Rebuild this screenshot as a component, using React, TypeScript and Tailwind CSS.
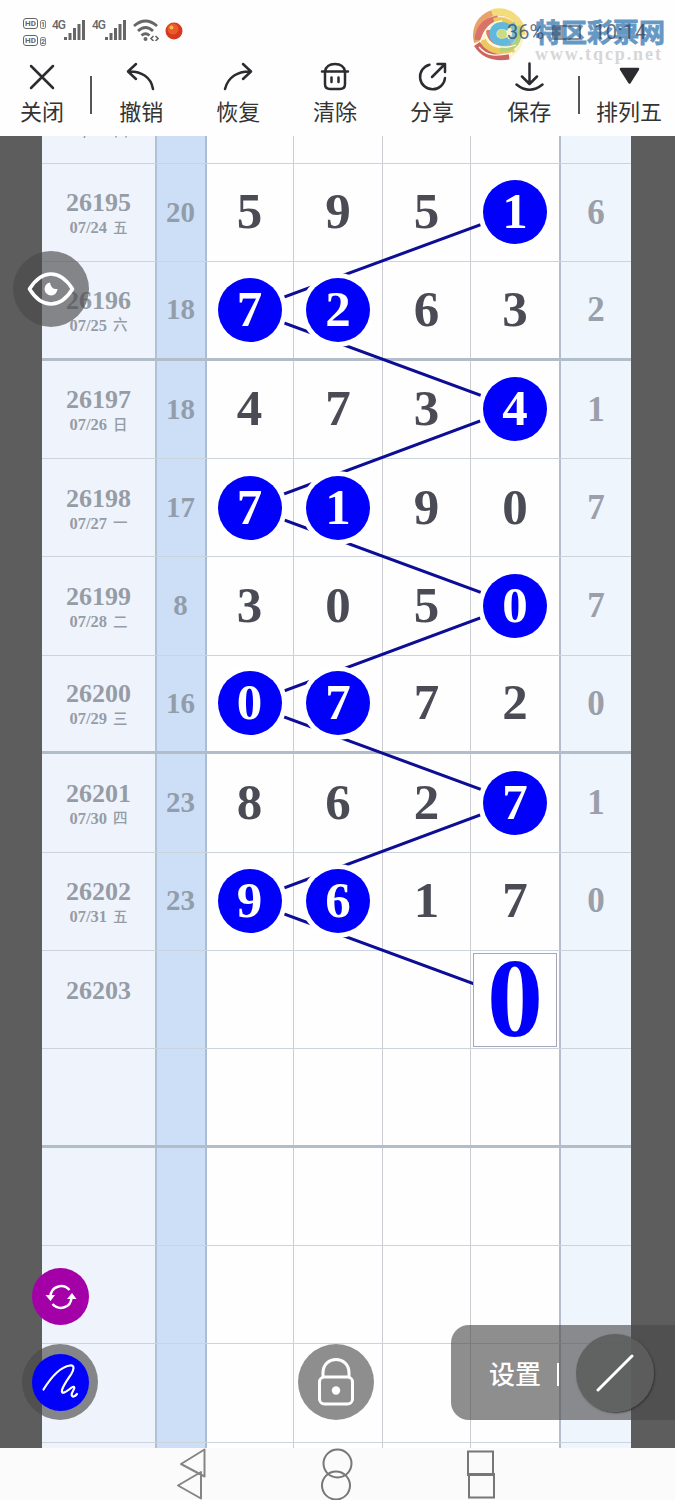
import type { ReactNode } from 'react';

type Draw = { issue: string; date?: string; sum?: string; nums?: string[]; marked?: number[]; last?: string; thick?: boolean };

const DRAWS: Draw[] = [
  { issue: '' },
  { issue: '26195', date: '07/24 五', sum: '20', nums: ['5', '9', '5', '1'], marked: [3], last: '6' },
  { issue: '26196', date: '07/25 六', sum: '18', nums: ['7', '2', '6', '3'], marked: [0, 1], last: '2', thick: true },
  { issue: '26197', date: '07/26 日', sum: '18', nums: ['4', '7', '3', '4'], marked: [3], last: '1' },
  { issue: '26198', date: '07/27 一', sum: '17', nums: ['7', '1', '9', '0'], marked: [0, 1], last: '7' },
  { issue: '26199', date: '07/28 二', sum: '8', nums: ['3', '0', '5', '0'], marked: [3], last: '7' },
  { issue: '26200', date: '07/29 三', sum: '16', nums: ['0', '7', '7', '2'], marked: [0, 1], last: '0', thick: true },
  { issue: '26201', date: '07/30 四', sum: '23', nums: ['8', '6', '2', '7'], marked: [3], last: '1' },
  { issue: '26202', date: '07/31 五', sum: '23', nums: ['9', '6', '1', '7'], marked: [0, 1], last: '0' },
  { issue: '26203' },
  { issue: '', thick: true },
  { issue: '' },
  { issue: '' },
  { issue: '' },
  { issue: '' },
];

// the row that will hold the hand-placed guess
const GUESS_ISSUE = '26203';

const COLS = 'grid grid-cols-[115px_50px_87px_89px_88px_90px_70px]';

// ─── Status bar ───────────────────────────────────────────────────────────────
function Signal() {
  return (
    <svg width="24" height="24" viewBox="0 0 24 24" stroke="#666" strokeWidth="3" className="-ml-0.5">
      <path d="M2.500 23v-3M7 23v-7M11.500 23v-12M16 23V7M20.500 23V3" />
    </svg>
  );
}

function HdBadge({ n }: { n: string }) {
  return (
    <div className="flex items-center gap-[2px] h-[12px]">
      <span className="w-[15px] h-[11px] rounded-[3px] border-[1.5px] border-[#666] text-[8px] leading-[9px] font-bold text-center">HD</span>
      <span className="w-[6px] h-[9px] rounded-[2px] border border-[#888] text-[7px] leading-[8px] font-bold text-center mt-[2px]">{n}</span>
    </div>
  );
}

function Watermark() {
  return (
    <div className="absolute left-[472px] top-[8px] flex items-start">
      <svg width="54" height="54" viewBox="0 0 54 54" fill="none">
        <circle cx="27" cy="27" r="25" fill="#fbf3d2" />
        <path d="M5 34A23 23 0 0 1 38 7" stroke="#e9a268" strokeWidth="6" />
        <path d="M20 5A23 23 0 0 1 50 27" stroke="#f3dc7c" strokeWidth="7" />
        <path d="M6 32C7 20 14 13 26 11" stroke="#d9736a" strokeWidth="7" />
        <path d="M22 13C34 9 44 17 45 30" stroke="#f0c860" strokeWidth="6" />
        <path d="M5 36C12 47 24 50 37 48" stroke="#cc6464" strokeWidth="7" />
        <path d="M11 32C15 42 27 46 42 41" stroke="#edc75f" strokeWidth="6" />
        <path d="M46 18C50 32 43 42 28 41" stroke="#b2d07c" strokeWidth="5" />
        <path d="M16 22C16 33 25 38 39 35" stroke="#d97d6a" strokeWidth="4" />
        <path d="M40 15C46 25 42 35 31 36" stroke="#79bfd8" strokeWidth="5" />
        <path d="M37 20C30 15 21 18 21 26 21 34 30 36 37 32" stroke="#5fb9de" strokeWidth="7" />
        <circle cx="30" cy="26" r="5" fill="#c9dc86" />
        <path d="M7 39C15 49 25 48 40 45M8 34C13 23 16 14 30 13M14 27C17 38 29 42 44 37" stroke="#fffbe6" strokeWidth="1.300" />
      </svg>
      <div className="ml-[9px] mt-[8px]">
        <div className="font-['Noto_Sans_CJK_SC',sans-serif] font-bold text-[26px] leading-[29px] text-[#6698c4] whitespace-nowrap [-webkit-text-stroke:0.8px_#6698c4]">特区彩票网</div>
        <div className="font-['Liberation_Serif',serif] font-bold text-[18px] leading-[18px] tracking-[1.9px] text-[#d6d6d6] whitespace-nowrap">www.tqcp.net</div>
      </div>
    </div>
  );
}

function StatusBar() {
  return (
    <div className="relative h-[58px] bg-[#fefefe] text-[#666] font-['Roboto',sans-serif]">
      <div className="flex items-start pl-[23px] pt-[17px]">
        <div className="flex flex-col gap-[5px] w-[29px]">
          <HdBadge n="1" />
          <HdBadge n="2" />
        </div>
        <span className="text-[12px] leading-[12px] font-medium mt-[2px] w-[13px] tracking-[-1px]">4G</span>
        <Signal />
        <span className="text-[12px] leading-[12px] font-medium mt-[2px] ml-[5px] w-[14px] tracking-[-1px]">4G</span>
        <Signal />
        <svg width="26" height="24" viewBox="0 0 26 24" fill="none" stroke="#666" strokeWidth="2.800" className="ml-[5px]">
          <path d="M1 9Q12.500 -1 24 9M5 14Q12.500 7 20 14M8.500 18.500Q12.500 15 16.500 18.500" />
          <circle cx="12.500" cy="22" r="2" fill="#666" stroke="none" />
          <path d="M20.500 19l-2.500 2.500 2.500 2.500M22.500 19l2.500 2.500-2.500 2.500" strokeWidth="1.600" />
        </svg>
        <svg width="18" height="18" viewBox="0 0 18 18" className="ml-[6px] mt-[5px]">
          <circle cx="9" cy="9" r="8.500" fill="#d63a1c" />
          <circle cx="8" cy="7" r="5.500" fill="#ea5a2e" />
          <circle cx="6.500" cy="5.500" r="2" fill="#ffb648" />
        </svg>
      </div>
      <Watermark />
      <div className="absolute left-[507px] top-[20px] flex items-center text-[20px] leading-[24px] text-[#34445c]/75">
        <span className="w-[45px]">36%</span>
        <span className="w-[29px] h-[15px] rounded-[2px] border-2 border-[#34445c]/60 flex">
          <span className="w-[9px] bg-[#34445c]/50" />
        </span>
        <span className="ml-[13px] tracking-[0.6px]">10:14</span>
      </div>
    </div>
  );
}

// ─── Toolbar ──────────────────────────────────────────────────────────────────
function Tool({ label, className, children }: { label: string; className: string; children: ReactNode }) {
  return (
    <button className={`flex flex-col items-center ${className}`}>
      <svg width="30" height="30" viewBox="0 0 30 30" fill="none" stroke="#2b2b30" strokeWidth="2.500" strokeLinecap="round" strokeLinejoin="round">{children}</svg>
      <span className="mt-[2px] text-[22px] leading-[32px] text-[#333] whitespace-nowrap">{label}</span>
    </button>
  );
}

function Toolbar() {
  return (
    <div className="h-[78px] bg-[#fefefe] flex items-start pt-1 font-['Noto_Sans_CJK_SC',sans-serif]">
      <Tool label="关闭" className="w-[84px] mr-1.5">
        <path d="M4 4l22 22M26 4L4 26" />
      </Tool>
      <div className="w-[2px] h-[38px] mt-[14px] mr-[1px] bg-[#555]" />
      <Tool label="撤销" className="w-[97px]">
        <path d="M10 2L2 9.500l8 7.500M2.500 9.500C15 9 25 15 27 27" />
      </Tool>
      <Tool label="恢复" className="w-[97px]">
        <path d="M20 2l8 7.500-8 7.500M27.500 9.500C15 9 5 15 2 27" />
      </Tool>
      <Tool label="清除" className="w-[97px]">
        <path d="M2 9.500h26M5 9.500C6 4 10 2 15 2s9 2 10 7.500M5 9.500V22q0 5 5 5h10q5 0 5-5V9.500M11.500 15.500v4.500M18.500 15.500v4.500" />
      </Tool>
      <Tool label="分享" className="w-[97px]">
        <path d="M12.500 2.700A12.500 12.500 0 1 0 28 16M15 15L28 2M20.500 2H28v8" />
      </Tool>
      <Tool label="保存" className="w-[98px]">
        <path d="M15.500 1.500v20M8 14.500l7.500 7.500 7.500-7.500M2.500 22.500q13 10.500 26 0" />
      </Tool>
      <div className="w-[2px] h-[38px] mt-[14px] bg-[#555]" />
      <Tool label="排列五" className="w-[92px] ml-[3px]">
        <path d="M7 7h17l-8.500 13.500Z" fill="#2b2b30" />
      </Tool>
    </div>
  );
}

// ─── Trend board ──────────────────────────────────────────────────────────────
function NumberCell({ value, marked }: { value?: string; marked?: boolean }) {
  if (!value) return null;
  return marked ? (
    <span className="relative z-10 size-16 shrink-0 rounded-full bg-[#0000fb] ring-[5px] ring-white text-white flex items-center justify-center">
      <span className="-mt-[1px]">{value}</span>
    </span>
  ) : (
    <span className="-mt-[1px]">{value}</span>
  );
}

function BoardRow({ draw }: { draw: Draw }) {
  const guess = draw.issue === GUESS_ISSUE;
  return (
    <div className={`${COLS} h-[98.4px] box-border ${draw.thick ? 'border-b-[3px] border-[#b1bdc8]' : 'border-b border-[#cbd3dc]'}`}>
      <div className="flex flex-col items-center justify-center border-r-2 border-[#b0c1d4] text-[#969ca6] font-bold">
        <span className={`text-[26px] leading-[26px] ${guess ? '-mt-[17px]' : 'mt-[6px]'}`}>{draw.issue}</span>
        {draw.date && <span className="text-[16.5px] leading-[24px] flex items-center gap-[6px]">
          {draw.date.slice(0, 5)}
          <span className="text-[14.5px] font-medium font-['Noto_Sans_CJK_SC',sans-serif] -mt-[3px]">{draw.date.slice(6)}</span>
        </span>}
      </div>
      <div className="flex items-center justify-center border-r-2 border-[#a9bdd3] text-[29px] font-bold text-[#929dac] pr-[1px]">{draw.sum}</div>
      {[0, 1, 2, 3].map(i => (
        <div key={i} className={`flex items-center justify-center text-[51px] leading-[51px] font-bold text-[#4a4b54] ${i === 3 ? 'border-r-2 border-[#b3bdcc]' : 'border-r border-[#cccdd3]'} ${i === 0 ? 'pr-[1px]' : ''}`}>
          {guess && i === 3 ? (
            <span className="relative z-10 w-[84px] h-[94px] border-[1.5px] border-[#a5a7b8] bg-white text-[#0000fb] text-[112px] leading-[88px] text-center">0</span>
          ) : (
            <NumberCell value={draw.nums?.[i]} marked={draw.marked?.includes(i)} />
          )}
        </div>
      ))}
      <div className="flex items-center justify-center text-[35px] font-bold text-[#9a9fa9] pt-[1px]">{draw.last}</div>
    </div>
  );
}

// zig-zag guide joining the circled numbers, in board coordinates
const GUIDE: [number, number][] = [
  [473, 76], [207, 174], [473, 272], [207, 371], [473, 469], [207, 568], [473, 666], [207, 765], [473, 863],
];

function Board() {
  return (
    <div className="h-[1312px] bg-[#5d5d5d] flex justify-center overflow-hidden pr-[2px]">
      <div className="relative w-[589px] font-['Liberation_Serif','Noto_Sans_CJK_SC',serif]">
        <div className="-mt-[70.6px] bg-[linear-gradient(to_right,#eff4fc_0_115px,#cddff7_115px_165px,#fefefe_165px_519px,#eef5fd_519px)]">
          {DRAWS.map((d, i) => <BoardRow key={i} draw={d} />)}
        </div>
        <svg className="absolute left-0 top-0" width="589" height="1312" viewBox="0 0 589 1312">
          <polyline points={GUIDE.map(p => p.join(',')).join(' ')} fill="none" stroke="#0d0d96" strokeWidth="3" />
          {/* tail of the date scrolled under the toolbar */}
          <path d="M43 0l-1 2M74 0v1.500M84 0v1.500" stroke="#969ca6" strokeWidth="1.500" />
        </svg>
      </div>
    </div>
  );
}

// ─── Floating controls ────────────────────────────────────────────────────────
function Floating() {
  return (
    <>
      <div className="absolute z-20 left-[13px] top-[251px] size-[76px] rounded-full bg-[#49494b]/65 flex items-center justify-center">
        <svg width="48" height="36" viewBox="0 0 48 36" fill="none" stroke="#fff" strokeWidth="3.600" strokeLinejoin="round">
          <path d="M2.500 18C15-2 33-2 45.500 18 33 38 15 38 2.500 18Z" />
          <path d="M23 11.500A6.500 6.500 0 1 0 30.500 18Q24 19 23 11.500Z" fill="#fff" stroke="none" />
        </svg>
      </div>
      <div className="absolute z-20 left-[32px] top-[1268px] size-[57px] rounded-full bg-[#a300a8] flex items-center justify-center">
        <svg width="32" height="26" viewBox="0 0 32 26" fill="none" stroke="#fff" strokeWidth="2.500">
          <path d="M5.500 12.500C6 2 18-1 24.500 6M26.500 13.500C26 24 14 27 7.500 20" />
          <path d="M.5 11h9.500l-4.500 6ZM22 15h9.500l-4.500-6Z" fill="#fff" stroke="none" />
        </svg>
      </div>
      <div className="absolute z-20 left-[22px] top-[1344px] size-[76px] rounded-full bg-[#494949]/65 flex items-center justify-center">
        <div className="size-[57px] rounded-full bg-[#0000fb] flex items-center justify-center">
          <svg width="38" height="38" viewBox="0 0 38 38" fill="none" stroke="#fff" strokeWidth="2.200" strokeLinecap="round" strokeLinejoin="round">
            <path d="M2.500 26.500C9 16 19 4 29 2.500c5-.5 4 4 1 9C27 16 22 23 21 27c-1 5 4 2 9-2 4-3 4 0 2 3-3 5 0 8 4 3" />
          </svg>
        </div>
      </div>
      <div className="absolute z-20 left-[298px] top-[1344px] size-[76px] rounded-full bg-[#494949]/62 flex items-center justify-center">
        <svg width="36" height="50" viewBox="0 0 36 50" fill="none" stroke="#fff" strokeWidth="3">
          <path d="M5 20v-4C5-2 31-2 31 16v4" />
          <rect x="1.500" y="20" width="33" height="27" rx="5" />
          <circle cx="18" cy="33.500" r="4.200" fill="#fff" stroke="none" />
        </svg>
      </div>
      <div className="absolute z-20 left-[451px] top-[1325px] w-[224px] h-[95px] rounded-l-[18px] bg-[#494949]/62 flex items-center pl-[38px]">
        <span className="text-white text-[26px] leading-[30px] font-medium font-['Noto_Sans_CJK_SC',sans-serif]">设置</span>
        <span className="ml-[16px] mt-[3px] w-[2px] h-[23px] bg-white" />
        <div className="ml-[17px] size-[78px] rounded-full bg-[#5d5d5d]/90 shadow-[1px_1px_2px_#333] flex items-center justify-center">
          <svg width="38" height="38" viewBox="0 0 38 38" stroke="#fff" strokeWidth="3" strokeLinecap="round">
            <path d="M2 36L36 2" />
          </svg>
        </div>
      </div>
    </>
  );
}

function NavBar() {
  return (
    <div className="h-[52px] bg-[#fbfbfb] flex justify-between pl-[176px] pr-[178px]">
      <svg width="32" height="52" viewBox="0 0 32 52" fill="none" stroke="#858585" strokeWidth="2" strokeLinejoin="round">
        <path d="M5 16L28.500 1.500v27ZM2 37.500L25 24v26.500Z" />
      </svg>
      <svg width="32" height="52" viewBox="0 0 32 52" fill="none" stroke="#777" strokeWidth="2" className="-ml-[1px]">
        <circle cx="16.500" cy="15.500" r="14" />
        <circle cx="15" cy="37.500" r="14" />
      </svg>
      <svg width="30" height="52" viewBox="0 0 30 52" fill="none" stroke="#777" strokeWidth="2">
        <rect x="1" y="3.500" width="25" height="23.500" />
        <rect x="2" y="26" width="25" height="23.500" />
      </svg>
    </div>
  );
}

export default function App() {
  return (
    <div className="relative w-[675px] h-[1500px] overflow-hidden bg-white">
      <StatusBar />
      <Toolbar />
      <Board />
      <NavBar />
      <Floating />
    </div>
  );
}
